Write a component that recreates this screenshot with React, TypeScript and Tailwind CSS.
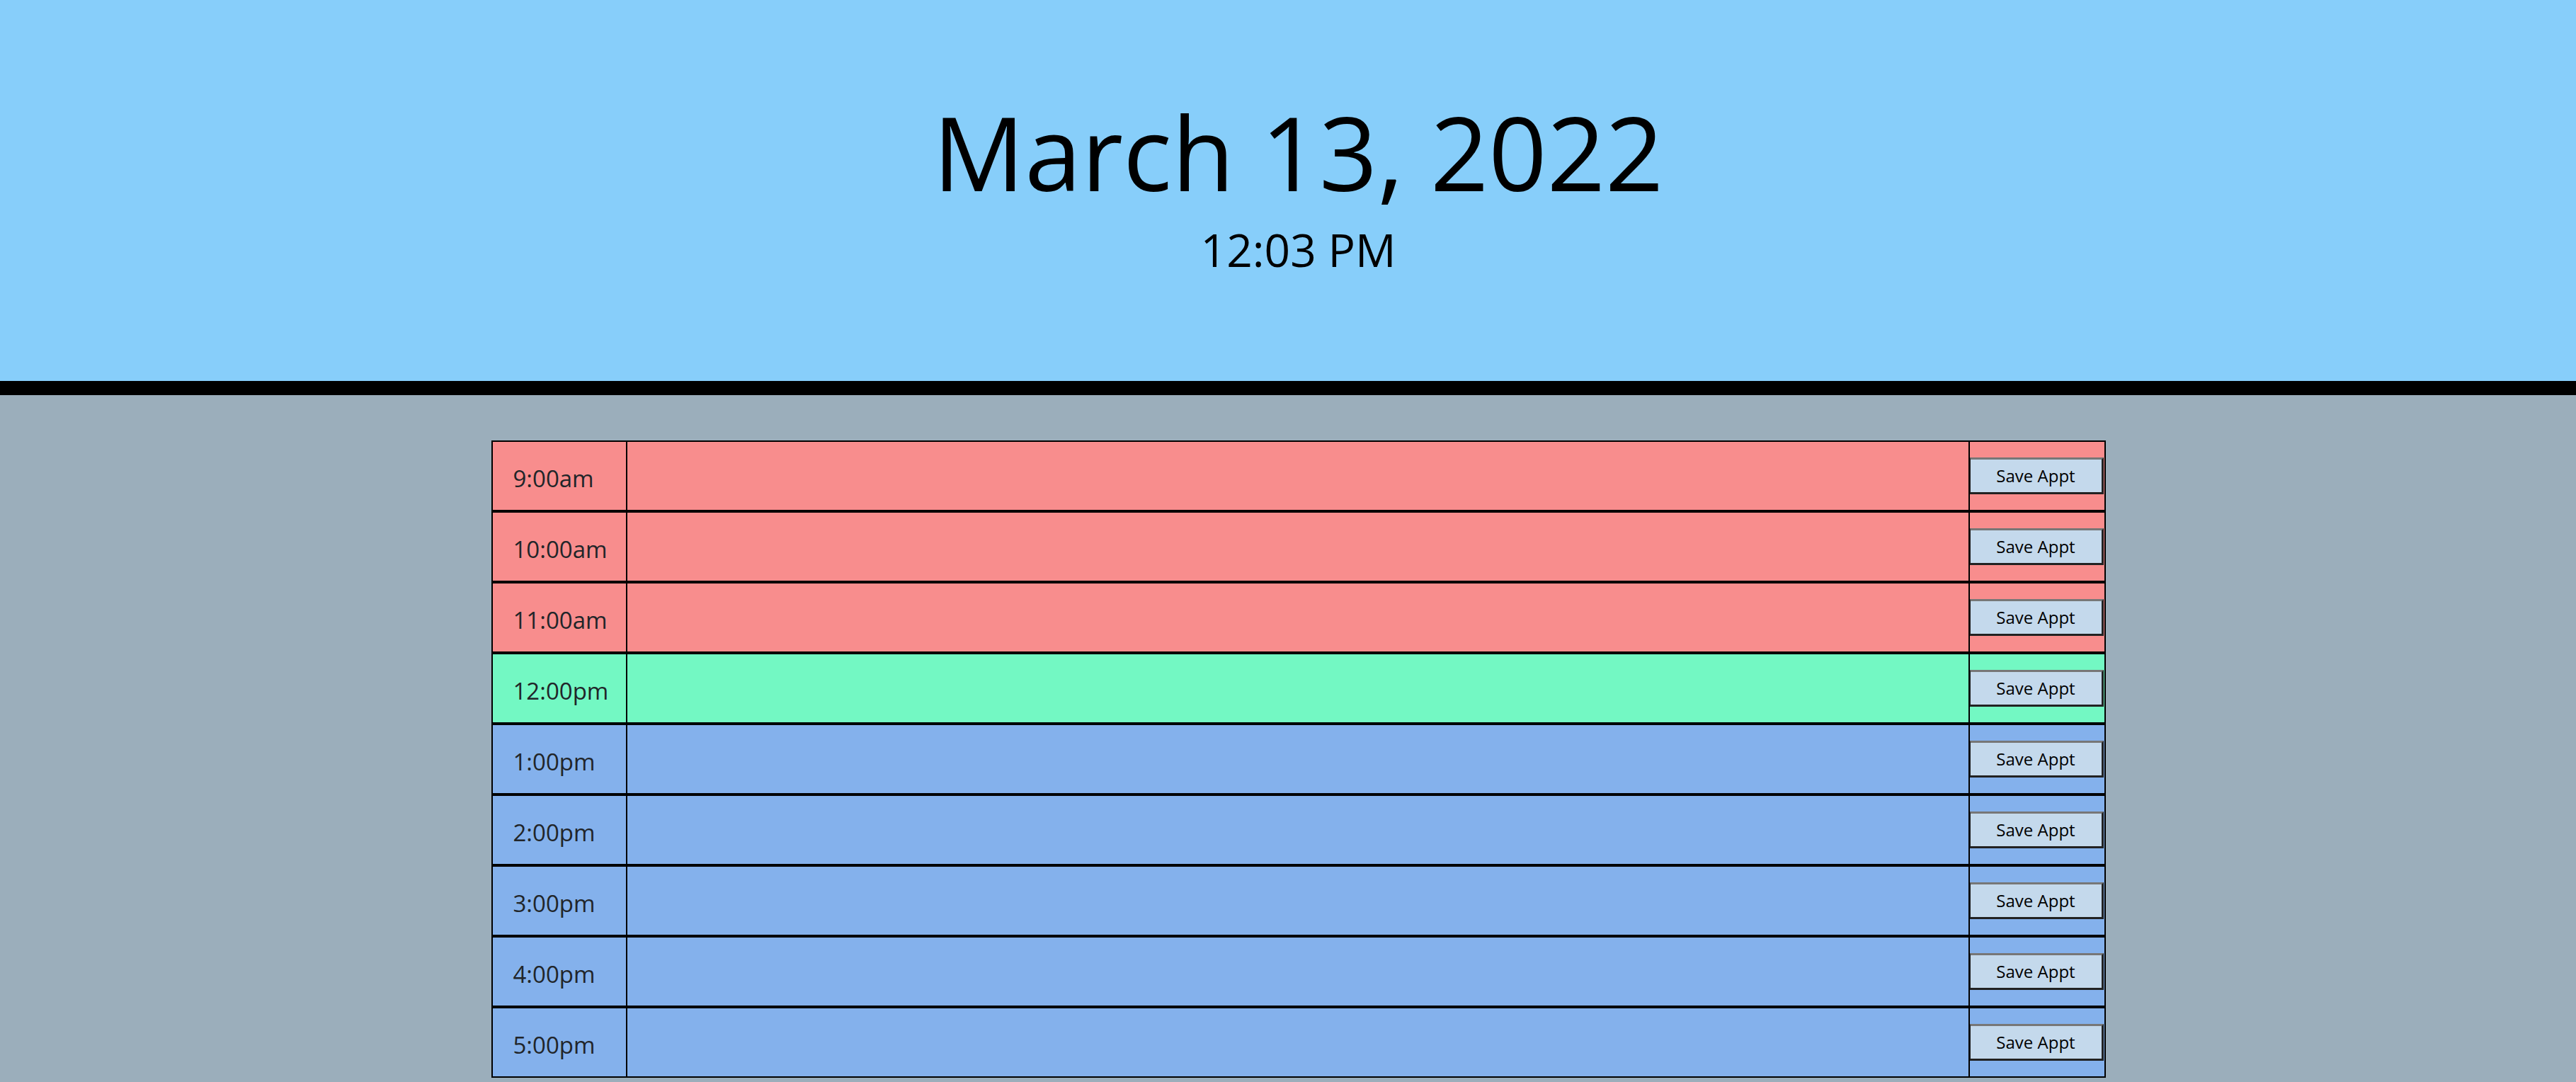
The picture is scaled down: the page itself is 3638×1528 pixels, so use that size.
import React from "react";

type Row = { label: string; state: "past" | "present" | "future" };

const rows: Row[] = [
  { label: "9:00am", state: "past" },
  { label: "10:00am", state: "past" },
  { label: "11:00am", state: "past" },
  { label: "12:00pm", state: "present" },
  { label: "1:00pm", state: "future" },
  { label: "2:00pm", state: "future" },
  { label: "3:00pm", state: "future" },
  { label: "4:00pm", state: "future" },
  { label: "5:00pm", state: "future" },
];

const bgFor: Record<Row["state"], string> = {
  past: "bg-[#f88d8d]",
  present: "bg-[#73f8c3]",
  future: "bg-[#84b1ec]",
};

export default function App() {
  return (
    <div
      className="min-h-screen bg-[#9baebb] text-[#212529]"
      style={{ fontFamily: "'Open Sans', 'Noto Sans', sans-serif" }}
    >
      <header className="h-[558px] bg-[#87cefa] border-b-[20px] border-black pt-[128px] pl-[29px] flex flex-col items-center text-black">
        <h1 className="text-[144px] leading-[172px] font-normal m-0">March 13, 2022</h1>
        <p className="text-[64px] leading-[96px] mt-[5px]">12:03 PM</p>
      </header>
      <main className="pt-[64px] pl-[29px] flex justify-center">
        <div className="w-[2280px] flex flex-col">
          {rows.map((r) => (
            <div key={r.label} className={`flex h-[100px] border-2 border-black ${bgFor[r.state]}`}>
              <div className="w-[190px] shrink-0 border-r-2 border-black pl-[29px] pt-[27px] text-[33px] leading-[49.5px] text-[#212529]">
                {r.label}
              </div>
              <textarea
                className="w-[1896px] shrink-0 border-r-2 border-black bg-transparent resize-none outline-none"
                defaultValue=""
              />
              <div className="w-[190px] shrink-0 flex items-center">
                <button
                  className="w-[189px] h-[52px] bg-[#c4d9ec] text-black text-[24px] leading-none border-l-[1px] border-l-[#222] border-t-[3px] border-t-[#777] border-r-[3px] border-r-[#222] border-b-[3px] border-b-[#222] flex items-center justify-center"
                >
                  Save Appt
                </button>
              </div>
            </div>
          ))}
        </div>
      </main>
    </div>
  );
}
